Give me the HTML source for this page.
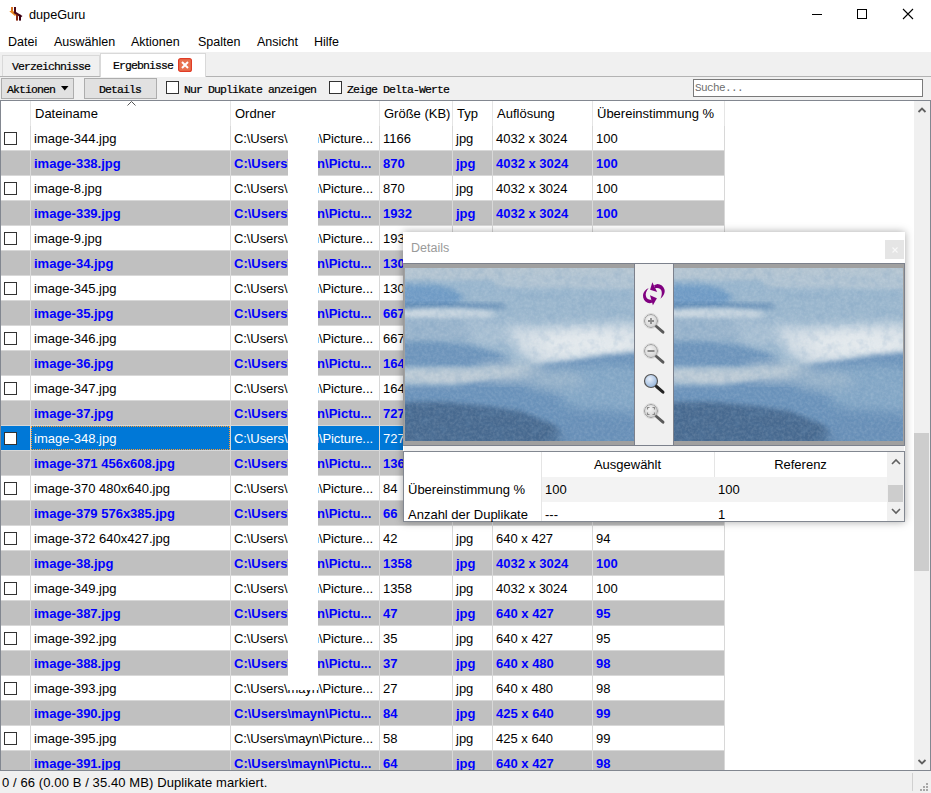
<!DOCTYPE html>
<html><head><meta charset="utf-8">
<style>
*{box-sizing:border-box;margin:0;padding:0}
html,body{width:931px;height:793px;overflow:hidden;background:#fff}
body{position:relative;font-family:"Liberation Sans",sans-serif;font-size:13px;color:#000}
.abs{position:absolute}
.t{position:absolute;white-space:pre;line-height:16px}
/* title */
#title{left:29px;top:7px;font-size:12.7px}
.menu{position:absolute;top:36px;font-size:12.5px;line-height:12px;white-space:pre}
/* tabs/toolbar */
#bar{left:0;top:52px;width:931px;height:48px;background:#f0f0f0}
#tabline{left:0;top:76px;width:931px;height:1px;background:#b3b3b3}
.tab{position:absolute;font-family:"Liberation Mono",monospace;font-size:10px;white-space:pre}
#tab1{left:2px;top:55px;width:98px;height:21px;background:#f0f0f0;border:1px solid #d9d9d9;border-bottom:none}
#tab2{left:100px;top:53px;width:106px;height:24px;background:#fff;border:1px solid #d9d9d9;border-bottom:none}
.btn{position:absolute;top:78px;height:21px;background:#e1e1e1;border:1px solid #adadad}
.mono{font-family:"Liberation Mono",monospace;font-size:11.5px;letter-spacing:-0.9px;-webkit-text-stroke:0.2px #000;white-space:pre;position:absolute;line-height:10px}
.chk{position:absolute;width:13px;height:13px;background:#fff;border:1px solid #333}
#search{left:693px;top:79px;width:230px;height:18px;background:#fff;border:1px solid #7a7a7a}
/* table */
#tbl{left:0;top:100px;width:931px;height:671px;border:1px solid #828790;background:#fff;overflow:hidden}
.row{position:absolute;left:1px;width:723px;height:24px}
.rw{background:#fff}
.rr{background:#c0c0c0;color:#0000ff;font-weight:bold}
.rs{background:#0078d7;color:#fff}
.c{position:absolute;top:0;height:24px;line-height:26px;padding-left:3px;white-space:pre;overflow:hidden}
.cb{position:absolute;left:3px;top:6px;width:13px;height:13px;background:#fff;border:1px solid #333}
.gh{position:absolute;left:1px;width:723px;height:1px;background:#d8d8d8}
.gv{position:absolute;top:126px;width:1px;height:645px;background:#d8d8d8}
.hs{position:absolute;top:101px;width:1px;height:25px;background:#e5e5e5}
.hc{position:absolute;top:101px;height:25px;line-height:25px;padding-left:4px;white-space:pre}
.focus{position:absolute;left:30px;top:0;width:199px;height:24px;border:1px dotted #ff9a2e}
</style></head>
<body>
<!-- title bar -->
<svg class="abs" style="left:6px;top:4px" width="20" height="20" viewBox="0 0 20 20">
 <rect x="5" y="3" width="2" height="5" fill="#d8701c"/>
 <rect x="8" y="3" width="2" height="5" fill="#4a0818"/>
 <path d="M3.3 7.2 L6.5 6.6 L11 10 L9 12 Z" fill="#e8861e"/>
 <path d="M8.5 7 L16.5 12 L14.8 13.6 L7.5 9 Z" fill="#48061a"/>
 <rect x="10" y="10.8" width="2" height="5.8" fill="#8a2810"/>
 <rect x="13" y="10.8" width="2" height="5.8" fill="#3a0014"/>
</svg>
<div class="t" id="title">dupeGuru</div>
<div class="abs" style="left:812px;top:14px;width:10px;height:1px;background:#000"></div>
<div class="abs" style="left:857px;top:9px;width:10px;height:10px;border:1px solid #000"></div>
<svg class="abs" style="left:902px;top:8px" width="12" height="12" viewBox="0 0 12 12"><path d="M1 1L11 11M11 1L1 11" stroke="#000" stroke-width="1.1"/></svg>
<!-- menu -->
<div class="menu" style="left:8px">Datei</div>
<div class="menu" style="left:54px">Auswählen</div>
<div class="menu" style="left:131px">Aktionen</div>
<div class="menu" style="left:198px">Spalten</div>
<div class="menu" style="left:257px">Ansicht</div>
<div class="menu" style="left:314px">Hilfe</div>
<!-- tabs + toolbar -->
<div class="abs" id="bar"></div>
<div class="abs" id="tabline"></div>
<div class="abs" id="tab1"></div>
<div class="abs" id="tab2"></div>
<div class="mono" style="left:12px;top:62px">Verzeichnisse</div>
<div class="mono" style="left:113px;top:61px">Ergebnisse</div>
<svg class="abs" style="left:178px;top:58px" width="14" height="14" viewBox="0 0 14 14"><rect x="0.6" y="0.6" width="12.8" height="12.8" rx="2" fill="#e8714f" stroke="#e03c26" stroke-width="1.2"/><path d="M4 4L10 10M10 4L4 10" stroke="#fff" stroke-width="2"/></svg>
<div class="btn" style="left:1px;width:73px"></div>
<div class="mono" style="left:7px;top:85px">Aktionen</div>
<svg class="abs" style="left:61px;top:86px" width="8" height="5" viewBox="0 0 8 5"><path d="M0 0H7.5L3.75 4.5Z" fill="#000"/></svg>
<div class="btn" style="left:84px;width:73px"></div>
<div class="mono" style="left:99px;top:85px">Details</div>
<div class="chk" style="left:166px;top:81px"></div>
<div class="mono" style="left:184px;top:85px">Nur Duplikate anzeigen</div>
<div class="chk" style="left:329px;top:81px"></div>
<div class="mono" style="left:347px;top:85px">Zeige Delta-Werte</div>
<div class="abs" id="search"></div>
<div class="abs" style="left:695px;top:82px;font-family:'Liberation Mono',monospace;font-size:11px;letter-spacing:-0.6px;color:#6d6d6d;line-height:12px;white-space:pre">Suche...</div>
<!-- table -->
<div class="abs" id="tbl"></div>
<div class="hs" style="left:30px"></div><div class="hs" style="left:230px"></div><div class="hs" style="left:379px"></div><div class="hs" style="left:452px"></div><div class="hs" style="left:492px"></div><div class="hs" style="left:592px"></div><div class="hs" style="left:724px"></div>
<div class="hc" style="left:31px">Dateiname</div><div class="hc" style="left:231px">Ordner</div><div class="hc" style="left:380px">Größe (KB)</div><div class="hc" style="left:453px">Typ</div><div class="hc" style="left:493px">Auflösung</div><div class="hc" style="left:593px">Übereinstimmung %</div>
<svg class="abs" style="left:127px;top:101px" width="9" height="5" viewBox="0 0 9 5"><path d="M0.5 4.5L4.5 0.5L8.5 4.5" stroke="#555" fill="none"/></svg>
<div class="row rw" style="top:126px"><div class="cb"></div><div class="c" style="left:30px;width:199px">image-344.jpg</div><div class="c" style="left:230px;width:148px;letter-spacing:-0.08px">C:\Users\mayn\Picture...</div><div class="c" style="left:379px;width:72px">1166</div><div class="c" style="left:452px;width:39px">jpg</div><div class="c" style="left:492px;width:99px">4032 x 3024</div><div class="c" style="left:592px;width:131px">100</div></div>
<div class="row rr" style="top:151px"><div class="c" style="left:30px;width:199px">image-338.jpg</div><div class="c" style="left:230px;width:148px">C:\Users\mayn\Pictu...</div><div class="c" style="left:379px;width:72px">870</div><div class="c" style="left:452px;width:39px">jpg</div><div class="c" style="left:492px;width:99px">4032 x 3024</div><div class="c" style="left:592px;width:131px">100</div></div>
<div class="row rw" style="top:176px"><div class="cb"></div><div class="c" style="left:30px;width:199px">image-8.jpg</div><div class="c" style="left:230px;width:148px;letter-spacing:-0.08px">C:\Users\mayn\Picture...</div><div class="c" style="left:379px;width:72px">870</div><div class="c" style="left:452px;width:39px">jpg</div><div class="c" style="left:492px;width:99px">4032 x 3024</div><div class="c" style="left:592px;width:131px">100</div></div>
<div class="row rr" style="top:201px"><div class="c" style="left:30px;width:199px">image-339.jpg</div><div class="c" style="left:230px;width:148px">C:\Users\mayn\Pictu...</div><div class="c" style="left:379px;width:72px">1932</div><div class="c" style="left:452px;width:39px">jpg</div><div class="c" style="left:492px;width:99px">4032 x 3024</div><div class="c" style="left:592px;width:131px">100</div></div>
<div class="row rw" style="top:226px"><div class="cb"></div><div class="c" style="left:30px;width:199px">image-9.jpg</div><div class="c" style="left:230px;width:148px;letter-spacing:-0.08px">C:\Users\mayn\Picture...</div><div class="c" style="left:379px;width:72px">1932</div><div class="c" style="left:452px;width:39px">jpg</div><div class="c" style="left:492px;width:99px">4032 x 3024</div><div class="c" style="left:592px;width:131px">100</div></div>
<div class="row rr" style="top:251px"><div class="c" style="left:30px;width:199px">image-34.jpg</div><div class="c" style="left:230px;width:148px">C:\Users\mayn\Pictu...</div><div class="c" style="left:379px;width:72px">1300</div><div class="c" style="left:452px;width:39px">jpg</div><div class="c" style="left:492px;width:99px">4032 x 3024</div><div class="c" style="left:592px;width:131px">100</div></div>
<div class="row rw" style="top:276px"><div class="cb"></div><div class="c" style="left:30px;width:199px">image-345.jpg</div><div class="c" style="left:230px;width:148px;letter-spacing:-0.08px">C:\Users\mayn\Picture...</div><div class="c" style="left:379px;width:72px">1300</div><div class="c" style="left:452px;width:39px">jpg</div><div class="c" style="left:492px;width:99px">4032 x 3024</div><div class="c" style="left:592px;width:131px">100</div></div>
<div class="row rr" style="top:301px"><div class="c" style="left:30px;width:199px">image-35.jpg</div><div class="c" style="left:230px;width:148px">C:\Users\mayn\Pictu...</div><div class="c" style="left:379px;width:72px">667</div><div class="c" style="left:452px;width:39px">jpg</div><div class="c" style="left:492px;width:99px">4032 x 3024</div><div class="c" style="left:592px;width:131px">100</div></div>
<div class="row rw" style="top:326px"><div class="cb"></div><div class="c" style="left:30px;width:199px">image-346.jpg</div><div class="c" style="left:230px;width:148px;letter-spacing:-0.08px">C:\Users\mayn\Picture...</div><div class="c" style="left:379px;width:72px">667</div><div class="c" style="left:452px;width:39px">jpg</div><div class="c" style="left:492px;width:99px">4032 x 3024</div><div class="c" style="left:592px;width:131px">100</div></div>
<div class="row rr" style="top:351px"><div class="c" style="left:30px;width:199px">image-36.jpg</div><div class="c" style="left:230px;width:148px">C:\Users\mayn\Pictu...</div><div class="c" style="left:379px;width:72px">1643</div><div class="c" style="left:452px;width:39px">jpg</div><div class="c" style="left:492px;width:99px">4032 x 3024</div><div class="c" style="left:592px;width:131px">100</div></div>
<div class="row rw" style="top:376px"><div class="cb"></div><div class="c" style="left:30px;width:199px">image-347.jpg</div><div class="c" style="left:230px;width:148px;letter-spacing:-0.08px">C:\Users\mayn\Picture...</div><div class="c" style="left:379px;width:72px">1643</div><div class="c" style="left:452px;width:39px">jpg</div><div class="c" style="left:492px;width:99px">4032 x 3024</div><div class="c" style="left:592px;width:131px">100</div></div>
<div class="row rr" style="top:401px"><div class="c" style="left:30px;width:199px">image-37.jpg</div><div class="c" style="left:230px;width:148px">C:\Users\mayn\Pictu...</div><div class="c" style="left:379px;width:72px">727</div><div class="c" style="left:452px;width:39px">jpg</div><div class="c" style="left:492px;width:99px">4032 x 3024</div><div class="c" style="left:592px;width:131px">100</div></div>
<div class="row rs" style="top:426px"><div class="cb"></div><div class="c" style="left:30px;width:199px">image-348.jpg</div><div class="c" style="left:230px;width:148px;letter-spacing:-0.08px">C:\Users\mayn\Picture...</div><div class="c" style="left:379px;width:72px">727</div><div class="c" style="left:452px;width:39px">jpg</div><div class="c" style="left:492px;width:99px">4032 x 3024</div><div class="c" style="left:592px;width:131px">100</div><div class="focus"></div></div>
<div class="row rr" style="top:451px"><div class="c" style="left:30px;width:199px">image-371 456x608.jpg</div><div class="c" style="left:230px;width:148px">C:\Users\mayn\Pictu...</div><div class="c" style="left:379px;width:72px">136</div><div class="c" style="left:452px;width:39px">jpg</div><div class="c" style="left:492px;width:99px">456 x 608</div><div class="c" style="left:592px;width:131px">100</div></div>
<div class="row rw" style="top:476px"><div class="cb"></div><div class="c" style="left:30px;width:199px">image-370 480x640.jpg</div><div class="c" style="left:230px;width:148px;letter-spacing:-0.08px">C:\Users\mayn\Picture...</div><div class="c" style="left:379px;width:72px">84</div><div class="c" style="left:452px;width:39px">jpg</div><div class="c" style="left:492px;width:99px">480 x 640</div><div class="c" style="left:592px;width:131px">100</div></div>
<div class="row rr" style="top:501px"><div class="c" style="left:30px;width:199px">image-379 576x385.jpg</div><div class="c" style="left:230px;width:148px">C:\Users\mayn\Pictu...</div><div class="c" style="left:379px;width:72px">66</div><div class="c" style="left:452px;width:39px">jpg</div><div class="c" style="left:492px;width:99px">576 x 385</div><div class="c" style="left:592px;width:131px">100</div></div>
<div class="row rw" style="top:526px"><div class="cb"></div><div class="c" style="left:30px;width:199px">image-372 640x427.jpg</div><div class="c" style="left:230px;width:148px;letter-spacing:-0.08px">C:\Users\mayn\Picture...</div><div class="c" style="left:379px;width:72px">42</div><div class="c" style="left:452px;width:39px">jpg</div><div class="c" style="left:492px;width:99px">640 x 427</div><div class="c" style="left:592px;width:131px">94</div></div>
<div class="row rr" style="top:551px"><div class="c" style="left:30px;width:199px">image-38.jpg</div><div class="c" style="left:230px;width:148px">C:\Users\mayn\Pictu...</div><div class="c" style="left:379px;width:72px">1358</div><div class="c" style="left:452px;width:39px">jpg</div><div class="c" style="left:492px;width:99px">4032 x 3024</div><div class="c" style="left:592px;width:131px">100</div></div>
<div class="row rw" style="top:576px"><div class="cb"></div><div class="c" style="left:30px;width:199px">image-349.jpg</div><div class="c" style="left:230px;width:148px;letter-spacing:-0.08px">C:\Users\mayn\Picture...</div><div class="c" style="left:379px;width:72px">1358</div><div class="c" style="left:452px;width:39px">jpg</div><div class="c" style="left:492px;width:99px">4032 x 3024</div><div class="c" style="left:592px;width:131px">100</div></div>
<div class="row rr" style="top:601px"><div class="c" style="left:30px;width:199px">image-387.jpg</div><div class="c" style="left:230px;width:148px">C:\Users\mayn\Pictu...</div><div class="c" style="left:379px;width:72px">47</div><div class="c" style="left:452px;width:39px">jpg</div><div class="c" style="left:492px;width:99px">640 x 427</div><div class="c" style="left:592px;width:131px">95</div></div>
<div class="row rw" style="top:626px"><div class="cb"></div><div class="c" style="left:30px;width:199px">image-392.jpg</div><div class="c" style="left:230px;width:148px;letter-spacing:-0.08px">C:\Users\mayn\Picture...</div><div class="c" style="left:379px;width:72px">35</div><div class="c" style="left:452px;width:39px">jpg</div><div class="c" style="left:492px;width:99px">640 x 427</div><div class="c" style="left:592px;width:131px">95</div></div>
<div class="row rr" style="top:651px"><div class="c" style="left:30px;width:199px">image-388.jpg</div><div class="c" style="left:230px;width:148px">C:\Users\mayn\Pictu...</div><div class="c" style="left:379px;width:72px">37</div><div class="c" style="left:452px;width:39px">jpg</div><div class="c" style="left:492px;width:99px">640 x 480</div><div class="c" style="left:592px;width:131px">98</div></div>
<div class="row rw" style="top:676px"><div class="cb"></div><div class="c" style="left:30px;width:199px">image-393.jpg</div><div class="c" style="left:230px;width:148px;letter-spacing:-0.08px">C:\Users\mayn\Picture...</div><div class="c" style="left:379px;width:72px">27</div><div class="c" style="left:452px;width:39px">jpg</div><div class="c" style="left:492px;width:99px">640 x 480</div><div class="c" style="left:592px;width:131px">98</div></div>
<div class="row rr" style="top:701px"><div class="c" style="left:30px;width:199px">image-390.jpg</div><div class="c" style="left:230px;width:148px">C:\Users\mayn\Pictu...</div><div class="c" style="left:379px;width:72px">84</div><div class="c" style="left:452px;width:39px">jpg</div><div class="c" style="left:492px;width:99px">425 x 640</div><div class="c" style="left:592px;width:131px">99</div></div>
<div class="row rw" style="top:726px"><div class="cb"></div><div class="c" style="left:30px;width:199px">image-395.jpg</div><div class="c" style="left:230px;width:148px;letter-spacing:-0.08px">C:\Users\mayn\Picture...</div><div class="c" style="left:379px;width:72px">58</div><div class="c" style="left:452px;width:39px">jpg</div><div class="c" style="left:492px;width:99px">425 x 640</div><div class="c" style="left:592px;width:131px">99</div></div>
<div class="row rr" style="top:751px"><div class="c" style="left:30px;width:199px">image-391.jpg</div><div class="c" style="left:230px;width:148px">C:\Users\mayn\Pictu...</div><div class="c" style="left:379px;width:72px">64</div><div class="c" style="left:452px;width:39px">jpg</div><div class="c" style="left:492px;width:99px">640 x 427</div><div class="c" style="left:592px;width:131px">98</div></div>
<div class="gh" style="top:150px"></div><div class="gh" style="top:175px"></div><div class="gh" style="top:200px"></div><div class="gh" style="top:225px"></div><div class="gh" style="top:250px"></div><div class="gh" style="top:275px"></div><div class="gh" style="top:300px"></div><div class="gh" style="top:325px"></div><div class="gh" style="top:350px"></div><div class="gh" style="top:375px"></div><div class="gh" style="top:400px"></div><div class="gh" style="top:425px"></div><div class="gh" style="top:450px"></div><div class="gh" style="top:475px"></div><div class="gh" style="top:500px"></div><div class="gh" style="top:525px"></div><div class="gh" style="top:550px"></div><div class="gh" style="top:575px"></div><div class="gh" style="top:600px"></div><div class="gh" style="top:625px"></div><div class="gh" style="top:650px"></div><div class="gh" style="top:675px"></div><div class="gh" style="top:700px"></div><div class="gh" style="top:725px"></div><div class="gh" style="top:750px"></div><div class="gh" style="top:775px"></div>
<div class="gv" style="left:30px"></div><div class="gv" style="left:230px"></div><div class="gv" style="left:379px"></div><div class="gv" style="left:452px"></div><div class="gv" style="left:492px"></div><div class="gv" style="left:592px"></div><div class="gv" style="left:724px"></div>
<div class="abs" style="left:288px;top:120px;width:30px;height:570px;background:#fff"></div>
<!-- scrollbar -->
<div class="abs" style="left:0;top:770px;width:931px;height:1px;background:#828790"></div>
<div class="abs" style="left:914px;top:101px;width:16px;height:669px;background:#f0f0f0"></div>
<svg class="abs" style="left:917px;top:106px" width="10" height="8" viewBox="0 0 10 8"><path d="M1.5 6L5 2.5L8.5 6" stroke="#606060" stroke-width="1.8" fill="none"/></svg>
<svg class="abs" style="left:917px;top:758px" width="10" height="8" viewBox="0 0 10 8"><path d="M1.5 2L5 5.5L8.5 2" stroke="#606060" stroke-width="1.8" fill="none"/></svg>
<div class="abs" style="left:914px;top:433px;width:15px;height:138px;background:#cdcdcd"></div>
<!-- status bar -->
<div class="abs" style="left:0;top:771px;width:931px;height:22px;background:#f0f0f0"></div>
<div class="t" style="left:2px;top:775px;letter-spacing:0.1px">0 / 66 (0.00 B / 35.40 MB) Duplikate markiert.</div>
<div class="abs" style="left:912px;top:773px;width:1px;height:18px;background:#d0d0d0"></div>
<svg class="abs" style="left:920px;top:783px" width="10" height="10" viewBox="0 0 10 10" fill="#a8a8a8"><rect x="6" y="0" width="2" height="2"/><rect x="3" y="3" width="2" height="2"/><rect x="6" y="3" width="2" height="2"/><rect x="0" y="6" width="2" height="2"/><rect x="3" y="6" width="2" height="2"/><rect x="6" y="6" width="2" height="2"/></svg>

<!-- details dialog -->
<div class="abs" style="left:403px;top:232px;width:502px;height:290px;background:#fff;box-shadow:0 0 8px rgba(0,0,0,0.35)"></div>
<div class="t" style="left:411px;top:240px;font-size:12.5px;color:#9a9a9a">Details</div>
<div class="abs" style="left:885px;top:240px;width:19px;height:19px;background:#e5e5e5"></div>
<svg class="abs" style="left:891px;top:246px" width="8" height="8" viewBox="0 0 8 8"><path d="M1.5 1.5L6.5 6.5M6.5 1.5L1.5 6.5" stroke="#f8f8f8" stroke-width="1.1"/></svg>
<div class="abs" style="left:403px;top:263px;width:502px;height:183px;background:#a0a0a0;border:1px solid #7c818c;border-left-color:#9a9a9a;border-right-color:#7c818c"></div>
<svg class="abs" style="left:405px;top:268px" width="229" height="173" viewBox="0 0 229 173">
 <defs>
  <filter id="bl" x="-20%" y="-20%" width="140%" height="140%"><feGaussianBlur stdDeviation="2.5"/></filter>
  <filter id="bl2" x="-30%" y="-30%" width="160%" height="160%"><feGaussianBlur stdDeviation="6"/></filter>
  <clipPath id="cp"><rect width="229" height="173"/></clipPath>
  <filter id="nz" x="0" y="0" width="100%" height="100%"><feTurbulence type="fractalNoise" baseFrequency="0.35" numOctaves="2" seed="3"/><feColorMatrix type="matrix" values="0 0 0 0 1  0 0 0 0 1  0 0 0 0 1  0 0 0 -1.6 1.05"/></filter>
  <filter id="nz2" x="0" y="0" width="100%" height="100%"><feTurbulence type="fractalNoise" baseFrequency="0.12" numOctaves="3" seed="8"/><feColorMatrix type="matrix" values="0 0 0 0 0.15  0 0 0 0 0.3  0 0 0 0 0.5  0 0 0 -2.2 1.25"/></filter>
  <g id="photo">
   <rect width="229" height="173" fill="#98b5cd"/>
   <rect x="-10" y="-10" width="250" height="22" fill="#b3c4d1" filter="url(#bl)"/>
   <path d="M90 8 L235 6 L235 22 L90 20 Z" fill="#b0c3d2" filter="url(#bl)"/>
   <path d="M-5 16 L30 17 L48 21 L60 30 L45 40 L-5 40 Z" fill="#6f9bc5" filter="url(#bl)"/>
   <path d="M60 24 L160 22 L235 24 L235 56 L120 58 L60 46 Z" fill="#9ab6cd" filter="url(#bl)"/>
   <path d="M-5 35 L50 35 L100 36 L100 40 L-5 42 Z" fill="#5f89b3" filter="url(#bl)"/>
   <ellipse cx="35" cy="47" rx="55" ry="7" fill="#c8d5df" filter="url(#bl)"/>
   <path d="M-5 50 L60 50 L100 55 L100 74 L-5 74 Z" fill="#98b3cb" filter="url(#bl)"/>
   <path d="M60 52 L120 54 L130 80 L70 76 Z" fill="#a9c0d3" filter="url(#bl2)"/>
   <path d="M105 60 L160 58 L235 55 L235 88 L135 98 L112 82 Z" fill="#d6dfe6" filter="url(#bl2)"/>
   <ellipse cx="185" cy="76" rx="48" ry="12" fill="#e2e8ec" filter="url(#bl2)"/>
   <path d="M-5 73 L30 73 L60 76 L95 85 L112 100 L60 100 L-5 98 Z" fill="#6d94bb" filter="url(#bl)"/>
   <ellipse cx="48" cy="108" rx="68" ry="8" fill="#bccad5" filter="url(#bl)"/>
   <path d="M-5 118 L50 118 L90 110 L115 103 L135 97 L165 93 L200 87 L235 84 L235 180 L-5 180 Z" fill="#6a92ba" filter="url(#bl)"/>
   <path d="M140 105 L200 96 L235 100 L235 160 L170 150 Z" fill="#84a7c6" filter="url(#bl2)"/>
   <ellipse cx="105" cy="104" rx="35" ry="9" fill="#b8c8d4" filter="url(#bl2)"/>
   <ellipse cx="150" cy="112" rx="30" ry="10" fill="#98b3ca" filter="url(#bl2)"/>
   <path d="M-5 134 L40 134 L80 138 L115 143 L150 157 L178 178 L-5 180 Z" fill="#46698f" filter="url(#bl)"/>
   <path d="M160 140 L235 145 L235 180 L150 180 Z" fill="#678fb7" filter="url(#bl2)"/>
   <rect width="229" height="173" filter="url(#nz)" opacity="0.15"/>
   <rect width="229" height="173" filter="url(#nz2)" opacity="0.2"/>
  </g>
 </defs>
 <g clip-path="url(#cp)"><use href="#photo"/></g>
</svg>
<svg class="abs" style="left:674px;top:268px" width="229" height="173" viewBox="0 0 229 173"><g clip-path="url(#cp)"><use href="#photo"/></g></svg>
<div class="abs" style="left:634px;top:264px;width:40px;height:181px;background:#f0f0f0;border-left:1px solid #7c818c;border-right:1px solid #7c818c"></div>
<div class="abs" style="left:404px;top:446px;width:500px;height:5px;background:#f0f0f0"></div>
<div class="abs" style="left:403px;top:451px;width:502px;height:71px;background:#fff;border:1px solid #828790"></div>
<div class="abs" style="left:542px;top:477px;width:345px;height:25px;background:#f3f3f3"></div>
<div class="abs" style="left:541px;top:452px;width:1px;height:25px;background:#e5e5e5"></div>
<div class="abs" style="left:714px;top:452px;width:1px;height:25px;background:#e5e5e5"></div>
<div class="abs" style="left:541px;top:477px;width:1px;height:44px;background:#e6e6e6"></div>
<div class="t" style="left:541px;top:457px;width:173px;text-align:center">Ausgewählt</div>
<div class="t" style="left:714px;top:457px;width:173px;text-align:center">Referenz</div>
<div class="t" style="left:408px;top:482px">Übereinstimmung %</div>
<div class="t" style="left:545px;top:482px">100</div>
<div class="t" style="left:718px;top:482px">100</div>
<div class="t" style="left:408px;top:507px">Anzahl der Duplikate</div>
<div class="t" style="left:545px;top:507px">---</div>
<div class="t" style="left:718px;top:507px">1</div>
<div class="abs" style="left:887px;top:452px;width:17px;height:69px;background:#f0f0f0"></div>
<div class="abs" style="left:888px;top:485px;width:15px;height:17px;background:#cdcdcd"></div>
<svg class="abs" style="left:891px;top:458px" width="10" height="8" viewBox="0 0 10 8"><path d="M1 6L5 2L9 6" stroke="#606060" stroke-width="1.6" fill="none"/></svg>
<svg class="abs" style="left:891px;top:507px" width="10" height="8" viewBox="0 0 10 8"><path d="M1 2L5 6L9 2" stroke="#606060" stroke-width="1.6" fill="none"/></svg>
<!-- tool icons -->
<svg class="abs" style="left:638px;top:278px;z-index:3" width="32" height="32" viewBox="0 0 32 32">
 <path d="M22.4 20.8 C25.5 18, 27.5 14.5, 26.4 11.2 C25.5 8.2, 22.8 6.2, 19.4 6 L16.1 7.3 L17.2 10.3 C18.5 9.8, 20.5 9.6, 22.2 10.9 C24.2 12.5, 24.4 16.5, 22.4 20.8 Z" fill="#800080"/>
 <path d="M14.3 4.2 L12.1 11.8 L19.2 14 Z" fill="#800080"/>
 <path d="M10.7 9.9 C7.5 11.5, 5.2 14, 5 17 C4.8 20.5, 6.5 23.5, 9.5 24.8 C11.2 25.4, 13 25.2, 14.5 24.4 L13.5 21.6 C11.5 22.2, 9.2 21.2, 8.2 19 C7 16.2, 8.2 12.5, 10.7 9.9 Z" fill="#800080"/>
 <path d="M14.9 27.2 L12 17.2 L18.9 20.2 Z" fill="#800080"/>
</svg>
<svg class="abs" style="left:635px;top:264px" width="39" height="180" viewBox="0 0 39 180">
 <defs>
  <radialGradient id="lens" cx="0.4" cy="0.35" r="0.7"><stop offset="0" stop-color="#f4f4f4"/><stop offset="1" stop-color="#cfcfcf"/></radialGradient>
  <radialGradient id="lensb" cx="0.4" cy="0.35" r="0.7"><stop offset="0" stop-color="#e8f0fb"/><stop offset="1" stop-color="#8fb0d8"/></radialGradient>
 </defs>

 <g stroke-linecap="round">
  <g transform="translate(0,57)"><circle cx="16" cy="0" r="6.5" fill="url(#lens)" stroke="#9a9a9a" stroke-width="1"/><circle cx="16" cy="0" r="7.5" fill="none" stroke="#d8d8d8" stroke-width="1"/><path d="M21.5 5.5L28 11.2" stroke="#5a5a5a" stroke-width="2.9"/><path d="M13 0H19M16 -3V3" stroke="#8a8a8a" stroke-width="1.8" stroke-linecap="butt"/></g>
  <g transform="translate(0,87)"><circle cx="16" cy="0" r="6.5" fill="url(#lens)" stroke="#9a9a9a" stroke-width="1"/><circle cx="16" cy="0" r="7.5" fill="none" stroke="#d8d8d8" stroke-width="1"/><path d="M21.5 5.5L28 11.2" stroke="#5a5a5a" stroke-width="2.9"/><path d="M12.5 0H19.5" stroke="#8a8a8a" stroke-width="2" stroke-linecap="butt"/></g>
  <g transform="translate(0,117)"><circle cx="16" cy="0" r="6.5" fill="url(#lensb)" stroke="#555" stroke-width="1.2"/><path d="M21.5 5.5L28 11.2" stroke="#222" stroke-width="3"/></g>
  <g transform="translate(0,147)"><circle cx="16" cy="0" r="6.5" fill="url(#lens)" stroke="#9a9a9a" stroke-width="1"/><circle cx="16" cy="0" r="7.5" fill="none" stroke="#d8d8d8" stroke-width="1"/><path d="M21.5 5.5L28 11.2" stroke="#5a5a5a" stroke-width="2.9"/><path d="M12.5 -1.5V-3.5H14.5M17.5 -3.5H19.5V-1.5M19.5 1.5V3.5H17.5M14.5 3.5H12.5V1.5" stroke="#8a8a8a" stroke-width="1.2" fill="none" stroke-linecap="butt"/></g>
 </g>
</svg>
</body></html>
